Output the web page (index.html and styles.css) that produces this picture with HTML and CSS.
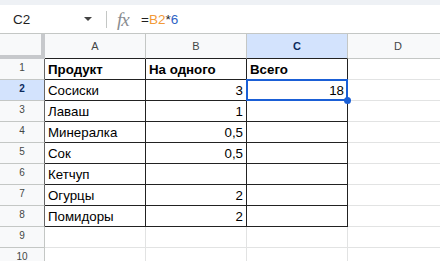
FILE: index.html
```html
<!DOCTYPE html>
<html lang="ru">
<head>
    <meta charset="UTF-8">
    <meta name="viewport" content="width=device-width, initial-scale=1.0">
    <title>Таблица</title>
    <link rel="stylesheet" href="styles.css">
</head>
<body>
    <div class="topStrip"></div>
    <div class="formulaBar">
        <div class="nameBox">
            <span class="cellRef">C2</span>
            <svg class="caret" width="8" height="4" viewBox="0 0 8 4"><path d="M0 0h8L4 4z" fill="#444"/></svg>
        </div>
        <div class="divider"></div>
        <span class="fx">fx</span>
        <div class="formula">=<span class="fRef">B2</span>*<span class="fNum">6</span></div>
    </div>

    <div class="sheet">
        <div class="corner"></div>
        <div class="colHead">A</div>
        <div class="colHead">B</div>
        <div class="colHead active">C</div>
        <div class="colHead last">D</div>

        <div class="rowHead t">1</div>
        <div class="cell t bold">Продукт</div>
        <div class="cell t bold">На одного</div>
        <div class="cell t bold">Всего</div>
        <div class="cell"></div>

        <div class="rowHead t active">2</div>
        <div class="cell t">Сосиски</div>
        <div class="cell t num">3</div>
        <div class="cell t num selected">18<span class="handle"></span></div>
        <div class="cell"></div>

        <div class="rowHead t">3</div>
        <div class="cell t">Лаваш</div>
        <div class="cell t num">1</div>
        <div class="cell t"></div>
        <div class="cell"></div>

        <div class="rowHead t">4</div>
        <div class="cell t">Минералка</div>
        <div class="cell t num">0,5</div>
        <div class="cell t"></div>
        <div class="cell"></div>

        <div class="rowHead t">5</div>
        <div class="cell t">Сок</div>
        <div class="cell t num">0,5</div>
        <div class="cell t"></div>
        <div class="cell"></div>

        <div class="rowHead t">6</div>
        <div class="cell t">Кетчуп</div>
        <div class="cell t num"></div>
        <div class="cell t"></div>
        <div class="cell"></div>

        <div class="rowHead t">7</div>
        <div class="cell t">Огурцы</div>
        <div class="cell t num">2</div>
        <div class="cell t"></div>
        <div class="cell"></div>

        <div class="rowHead t">8</div>
        <div class="cell t">Помидоры</div>
        <div class="cell t num">2</div>
        <div class="cell t"></div>
        <div class="cell"></div>

        <div class="rowHead">9</div>
        <div class="cell"></div>
        <div class="cell"></div>
        <div class="cell"></div>
        <div class="cell"></div>

        <div class="rowHead">10</div>
        <div class="cell"></div>
        <div class="cell"></div>
        <div class="cell"></div>
        <div class="cell"></div>
    </div>
</body>
</html>
```

FILE: styles.css
```css
*
{
    box-sizing: border-box;
}
body
{
    margin: 0px;
    width: 440px;
    height: 261px;
    overflow: hidden;
    background-color: white;
    font-family: "Liberation Sans", Arial, sans-serif;
    color: #000;
}
.topStrip
{
    height: 5px;
    background-color: #eef1f5;
}
.formulaBar
{
    height: 29px;
    display: flex;
    align-items: center;
    border-bottom: 1px solid #c4c7c5;
}
.nameBox
{
    width: 106px;
    display: flex;
    align-items: center;
    justify-content: space-between;
    padding-left: 13px;
    padding-right: 14px;
}
.cellRef
{
    font-size: 13.5px;
    color: #1f1f1f;
}
.caret
{
    display: block;
}
.divider
{
    width: 1px;
    height: 17px;
    background-color: #c4c7c5;
}
.fx
{
    margin-left: 10px;
    width: 24px;
    font-family: "Liberation Serif", serif;
    font-style: italic;
    font-size: 19px;
    line-height: 1;
    color: #8a8d91;
    letter-spacing: -1px;
}
.formula
{
    font-size: 13.5px;
    color: #1f1f1f;
}
.fRef
{
    color: #f29a38;
}
.fNum
{
    color: #2f63c4;
}
.sheet
{
    display: grid;
    grid-template-columns: 45px 101px 101px 101px 101px;
    grid-template-rows: 25px repeat(10, 21px);
}
.corner
{
    background-color: #f8f9fa;
    border-right: 4px solid #c7c9cc;
    border-bottom: 4px solid #c7c9cc;
}
.colHead
{
    background-color: #f8f9fa;
    border-right: 1px solid #c4c7c5;
    border-bottom: 1px solid #222;
    font-size: 11px;
    color: #444746;
    display: flex;
    align-items: center;
    justify-content: center;
}
.colHead.last
{
    border-bottom-color: #c4c7c5;
}
.colHead.active
{
    background-color: #d3e3fd;
    color: #0b2a5c;
    font-weight: bold;
}
.rowHead
{
    background-color: #f8f9fa;
    border-right: 1px solid #c4c7c5;
    border-bottom: 1px solid #c4c7c5;
    font-size: 10px;
    color: #444746;
    display: flex;
    align-items: center;
    justify-content: center;
    padding-bottom: 3px;
}
.rowHead.t
{
    border-right-color: #666;
}
.rowHead.active
{
    background-color: #d3e3fd;
    color: #0b2a5c;
    font-weight: bold;
}
.cell
{
    position: relative;
    border-right: 1px solid #e2e3e3;
    border-bottom: 1px solid #e2e3e3;
    font-size: 13.3px;
    padding: 0px 3px 2px 3px;
    display: flex;
    align-items: flex-end;
    white-space: nowrap;
}
.cell.t
{
    border-right-color: #222;
    border-bottom-color: #222;
}
.cell.bold
{
    font-weight: bold;
}
.cell.num
{
    justify-content: flex-end;
}
.cell.selected::after
{
    content: "";
    position: absolute;
    left: -1px;
    top: -1px;
    right: -1px;
    bottom: -1px;
    border: 2px solid #1a5fd6;
}
.handle
{
    position: absolute;
    right: -4px;
    bottom: -4px;
    width: 7px;
    height: 7px;
    border-radius: 50%;
    background-color: #1a5fd6;
    z-index: 2;
}
```
